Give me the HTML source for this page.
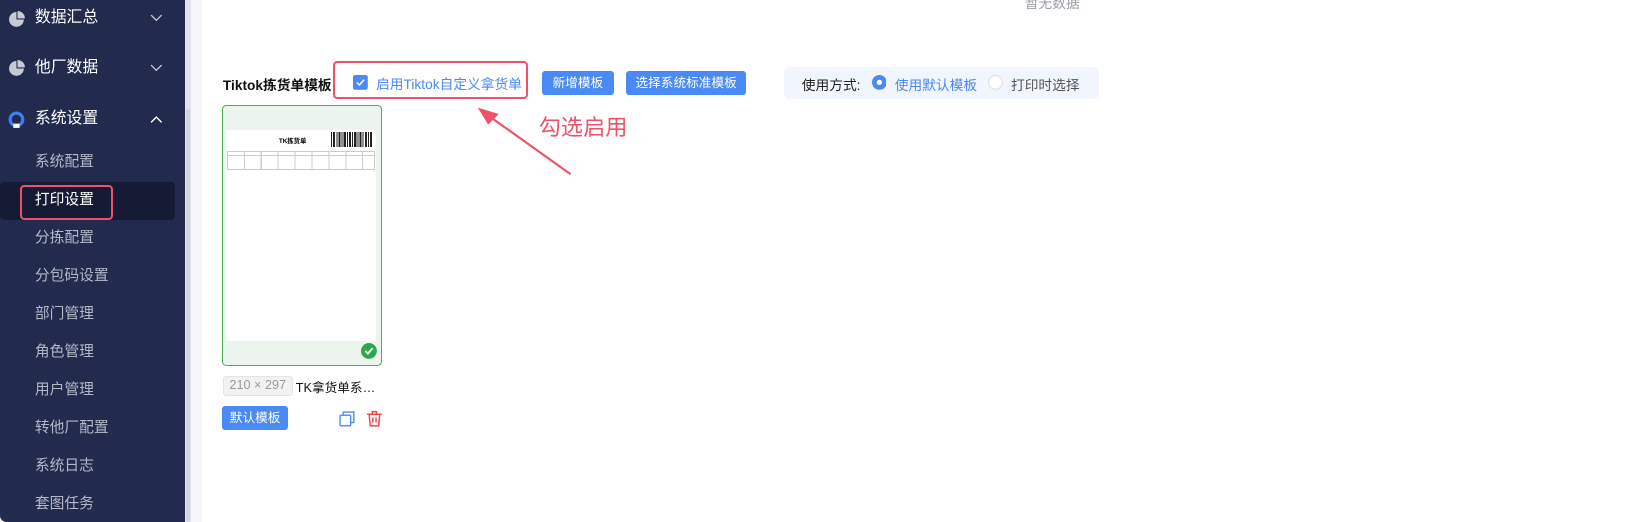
<!DOCTYPE html><html><head><meta charset="utf-8"><style>
*{margin:0;padding:0;box-sizing:border-box}
html,body{width:1648px;height:522px;overflow:hidden;background:#fff}
#w{width:1560px;height:494px;position:relative;zoom:1.0564;font-family:"Liberation Sans","Noto Sans CJK SC",sans-serif}
.a{position:absolute}
.side{left:0;top:0;width:175px;height:494px;background:#222a4d;border-bottom-left-radius:6px}
.mi{position:absolute;left:33px;color:#fff;font-size:15px;line-height:20px}
.si{position:absolute;left:33px;color:#b4b8c8;font-size:14px;line-height:20px}
.btn{position:absolute;background:#4a8af4;color:#fff;font-size:12px;border-radius:3px;text-align:center}
</style></head><body><div id="w">
<div class="a side"></div>
<div class="a" style="left:175px;top:0;width:6px;height:494px;background:#e4e5ec"></div>
<div class="a" style="left:176px;top:103px;width:4px;height:391px;background:#d3d5de;border-radius:2px"></div>
<div class="a" style="left:181px;top:0;width:10px;height:494px;background:#f5f6fa"></div>
<svg class="a" style="left:8px;top:10px" width="16" height="16"><circle cx="8" cy="8" r="7" fill="#c7c9d3"/><path d="M8 1 V8 H15 A7 7 0 0 0 8 1Z" fill="#222a4d"/><path d="M9 0 V7 H16 A7 7 0 0 0 9 0Z" fill="#c7c9d3"/></svg>
<svg class="a" style="left:8px;top:57px" width="16" height="16"><circle cx="8" cy="8" r="7" fill="#c7c9d3"/><path d="M8 1 V8 H15 A7 7 0 0 0 8 1Z" fill="#222a4d"/><path d="M9 0 V7 H16 A7 7 0 0 0 9 0Z" fill="#c7c9d3"/></svg>
<svg class="a" style="left:8px;top:105px" width="16" height="16"><circle cx="8" cy="8" r="6" fill="none" stroke="#3d7ef0" stroke-width="3"/><rect x="5" y="12" width="6" height="4" fill="#fff"/></svg>
<div class="mi" style="top:7px">数据汇总</div>
<div class="mi" style="top:54px">他厂数据</div>
<div class="mi" style="top:102px">系统设置</div>
<svg class="a" style="left:142px;top:13px" width="12" height="8"><path d="M1 1 L6 6 L11 1" fill="none" stroke="#c7c9d3" stroke-width="1.3"/></svg>
<svg class="a" style="left:142px;top:61px" width="12" height="8"><path d="M1 1 L6 6 L11 1" fill="none" stroke="#c7c9d3" stroke-width="1.3"/></svg>
<svg class="a" style="left:142px;top:109px" width="12" height="8"><path d="M1 7 L6 2 L11 7" fill="none" stroke="#fff" stroke-width="1.3"/></svg>
<div class="a" style="left:0;top:172px;width:166px;height:36px;background:#151a35;border-radius:4px"></div>
<div class="a" style="left:19px;top:175px;width:88px;height:33px;border:2px solid #f0516a;border-radius:4px"></div>
<div class="si" style="top:144px">系统配置</div>
<div class="si" style="top:180px;color:#fff">打印设置</div>
<div class="si" style="top:216px">分拣配置</div>
<div class="si" style="top:252px">分包码设置</div>
<div class="si" style="top:288px">部门管理</div>
<div class="si" style="top:324px">角色管理</div>
<div class="si" style="top:360px">用户管理</div>
<div class="si" style="top:396px">转他厂配置</div>
<div class="si" style="top:432px">系统日志</div>
<div class="si" style="top:468px">套图任务</div>
<div class="a" style="left:970px;top:-8px;font-size:13px;color:#9a9ca6">暂无数据</div>
<div class="a" style="left:211px;top:70px;font-size:13px;font-weight:bold;color:#111">Tiktok拣货单模板</div>
<div class="a" style="left:315px;top:58px;width:185px;height:36px;border:2px solid #f0516a;border-radius:4px"></div>
<svg class="a" style="left:334px;top:71px" width="14" height="14"><rect width="14" height="14" rx="2" fill="#4a8af4"/><path d="M3.5 7 L6 9.5 L10.5 4.5" fill="none" stroke="#fff" stroke-width="1.4"/></svg>
<div class="a" style="left:356px;top:69px;font-size:13px;color:#4a8af4">启用Tiktok自定义拿货单</div>
<div class="btn" style="left:513px;top:67px;width:68px;height:23px;line-height:23px">新增模板</div>
<div class="btn" style="left:593px;top:67px;width:113px;height:23px;line-height:23px">选择系统标准模板</div>
<div class="a" style="left:742px;top:63px;width:298px;height:31px;background:#f0f5fe;border-radius:6px"></div>
<div class="a" style="left:759px;top:70px;font-size:13px;color:#222">使用方式:</div>
<svg class="a" style="left:825px;top:71px" width="14" height="14"><circle cx="7" cy="7" r="7" fill="#4a8af4"/><circle cx="7" cy="7" r="2.5" fill="#fff"/></svg>
<div class="a" style="left:847px;top:70px;font-size:13px;color:#4a8af4">使用默认模板</div>
<svg class="a" style="left:935px;top:71px" width="14" height="14"><circle cx="7" cy="7" r="6.5" fill="#fff" stroke="#dcdfe6"/></svg>
<div class="a" style="left:957px;top:70px;font-size:13px;color:#555">打印时选择</div>
<svg class="a" style="left:440px;top:90px" width="110" height="80"><path d="M100 75 L20 18" stroke="#f0516a" stroke-width="2"/><path d="M12 12 L32 18 L22 28Z" fill="#f0516a"/></svg>
<div class="a" style="left:510px;top:104px;font-size:21px;color:#f0516a">勾选启用</div>
<div class="a" style="left:210px;top:99px;width:152px;height:247px;border:1px solid #4caf50;border-radius:4px;background:#ebf5ee"></div>
<div class="a" style="left:214px;top:123px;width:142px;height:200px;background:#fff"></div>
<div class="a" style="left:264px;top:129px;font-size:6px;font-weight:bold">TK拣货单</div>
<div class="a" style="left:313px;top:125px;width:40px;height:14px;background:repeating-linear-gradient(90deg,#222 0 1px,#fff 1px 2px,#222 2px 4px,#fff 4px 5px)"></div>
<div class="a" style="left:215px;top:143px;width:140px;height:18px;border:1px solid #ccc;background:repeating-linear-gradient(90deg,transparent 0 15px,#ccc 15px 16px)"></div>
<div class="a" style="left:215px;top:147px;width:140px;height:1px;background:#ccc"></div>
<svg class="a" style="left:342px;top:325px" width="15" height="15"><circle cx="7.5" cy="7.5" r="7.5" fill="#2ea54f"/><path d="M4 7.5 L6.5 10 L11 5" fill="none" stroke="#fff" stroke-width="1.8"/></svg>
<div class="a" style="left:211px;top:356px;width:66px;height:19px;background:#f2f2f2;border:1px solid #e5e5e5;border-radius:3px;font-size:12px;color:#999;text-align:center;line-height:17px">210 × 297</div>
<div class="a" style="left:280px;top:357px;font-size:12px;color:#111">TK拿货单系…</div>
<div class="btn" style="left:210px;top:384px;width:63px;height:23px;line-height:23px">默认模板</div>
<svg class="a" style="left:321px;top:389px" width="15" height="15"><rect x="1" y="4" width="10" height="10" rx="1" fill="none" stroke="#4a8af4" stroke-width="1.3"/><path d="M4 4 V1 H14 V11 H11" fill="none" stroke="#4a8af4" stroke-width="1.3"/></svg>
<svg class="a" style="left:346px;top:388px" width="16" height="16"><path d="M1 4 H15 M6 4 V1.5 H10 V4 M3 4 L4 15 H12 L13 4 M6.5 7 V12 M9.5 7 V12" fill="none" stroke="#f04848" stroke-width="1.4"/></svg>
</div></body></html>
